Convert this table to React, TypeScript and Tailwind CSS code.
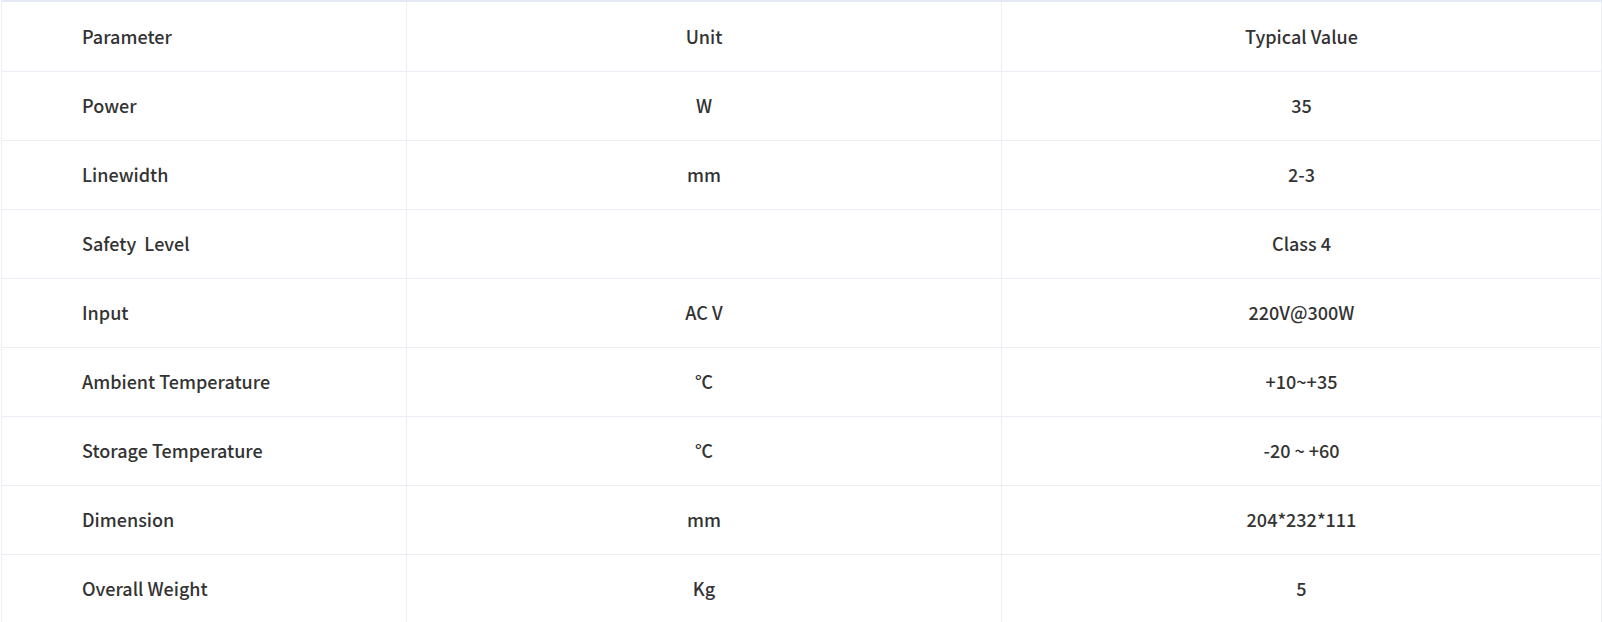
import React from 'react';

const rows: [string, string, string][] = [
  ['Power', 'W', '35'],
  ['Linewidth', 'mm', '2-3'],
  ['Safety  Level', '', 'Class 4'],
  ['Input', 'AC V', '220V@300W'],
  ['Ambient Temperature', '℃', '+10~+35'],
  ['Storage Temperature', '℃', '-20 ~ +60'],
  ['Dimension', 'mm', '204*232*111'],
  ['Overall Weight', 'Kg', '5'],
];

export default function App() {
  return (
    <div className="bg-white w-[1602px] h-[622px] overflow-hidden pl-px">
      <table
        className="border-collapse table-fixed w-[1600px] text-[18px] font-medium text-[#333] whitespace-pre"
        style={{ fontFamily: '"Noto Sans CJK SC", "Noto Sans", sans-serif' }}
      >
        <colgroup>
          <col className="w-[405px]" />
          <col className="w-[595px]" />
          <col className="w-[600px]" />
        </colgroup>
        <thead>
          <tr className="h-[70px]">
            <th className="border border-[#ebeef5] border-t-[#e4e9f3] border-t-2 pl-[80px] text-left font-medium">Parameter</th>
            <th className="border border-[#ebeef5] border-t-[#e4e9f3] border-t-2 text-center font-medium">Unit</th>
            <th className="border border-[#ebeef5] border-t-[#e4e9f3] border-t-2 text-center font-medium">Typical Value</th>
          </tr>
        </thead>
        <tbody>
          {rows.map(([name, unit, value]) => (
            <tr key={name} className="h-[69px]">
              <td className="border border-[#ebeef5] pl-[80px] text-left">{name}</td>
              <td className="border border-[#ebeef5] text-center">{unit}</td>
              <td className="border border-[#ebeef5] text-center">{value}</td>
            </tr>
          ))}
        </tbody>
      </table>
    </div>
  );
}
